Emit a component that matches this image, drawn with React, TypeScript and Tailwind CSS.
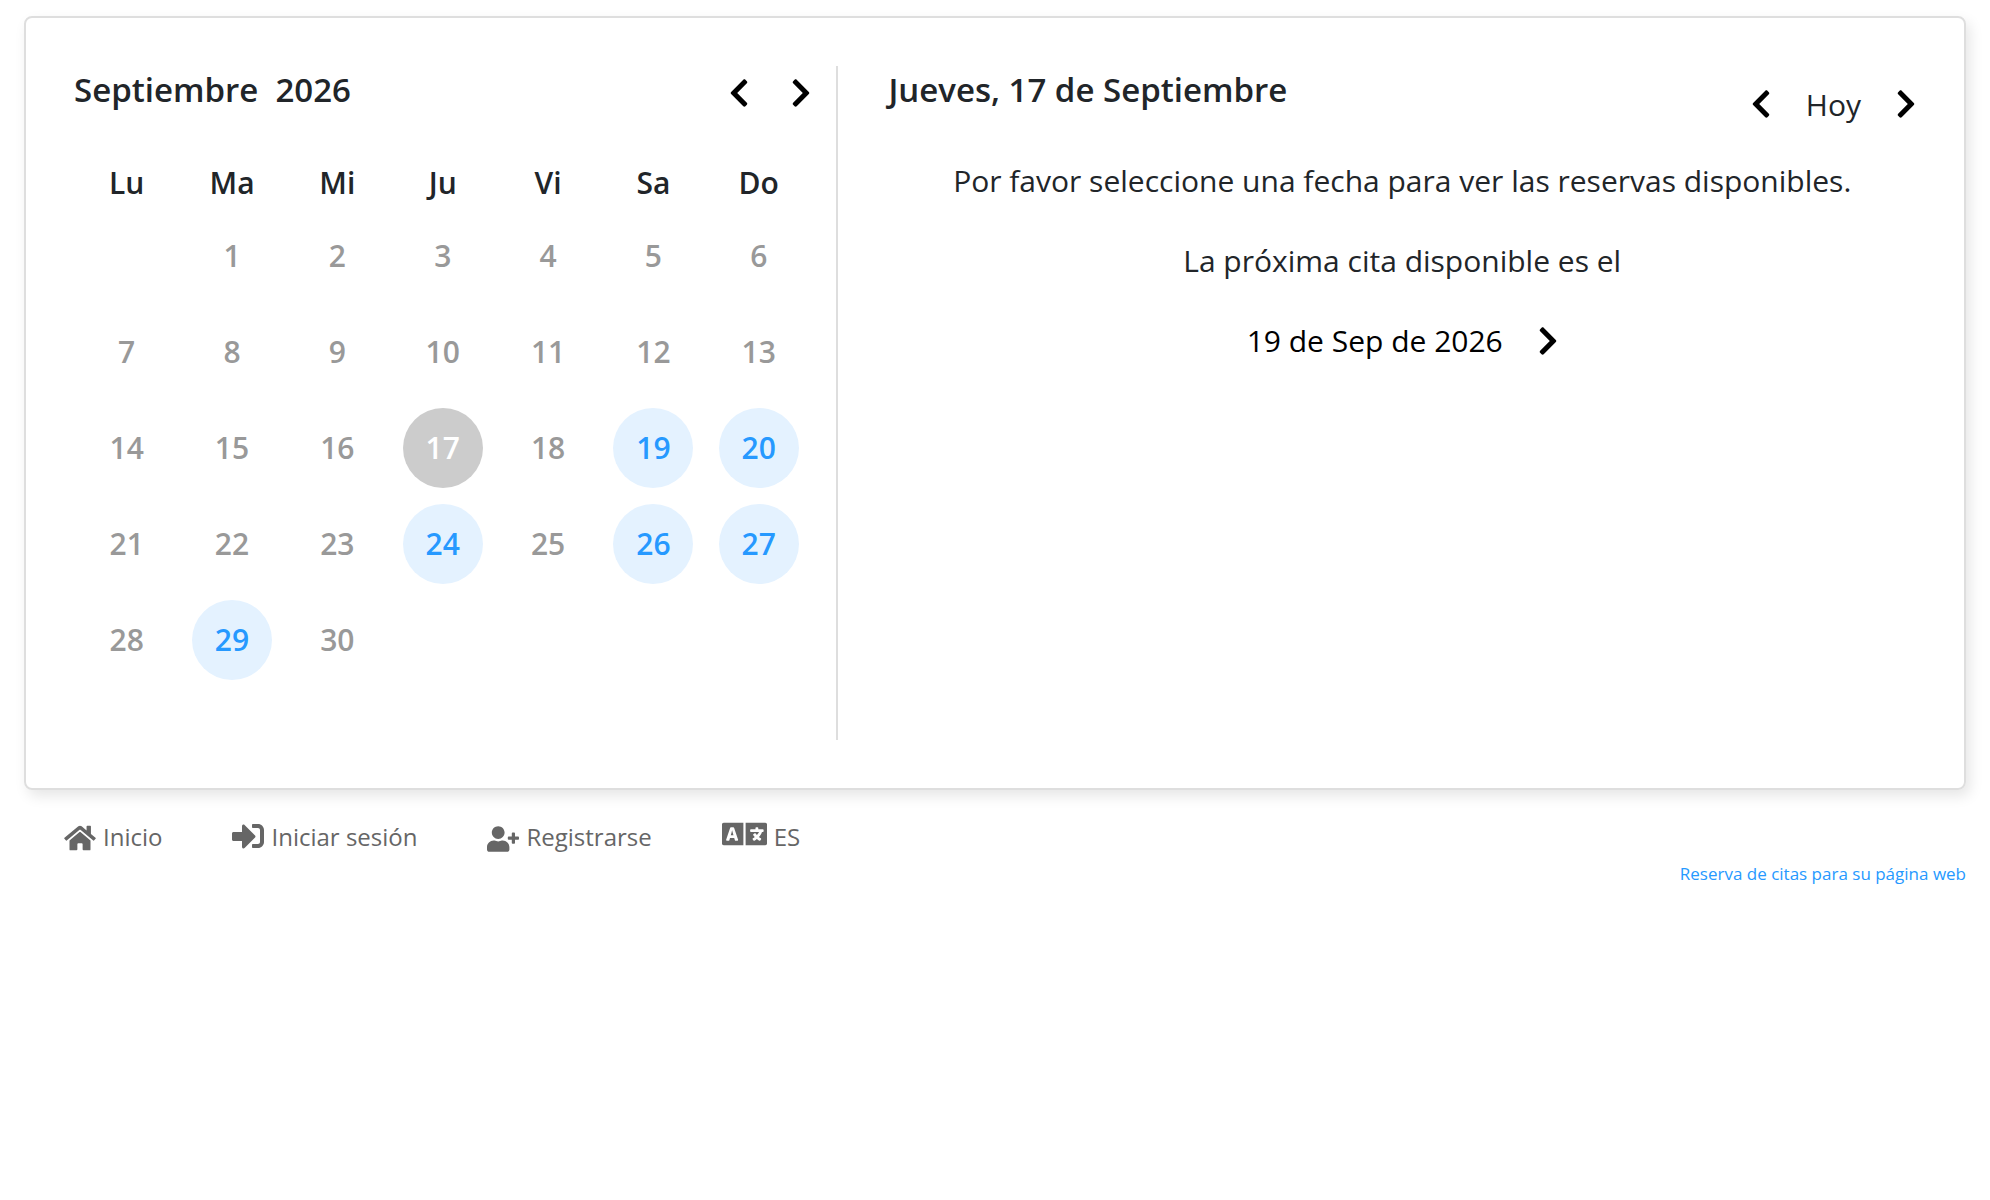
import { FaChevronLeft, FaChevronRight, FaHome, FaLanguage, FaSignInAlt, FaUserPlus } from "react-icons/fa";

const weekdays = ["Lu", "Ma", "Mi", "Ju", "Vi", "Sa", "Do"];

// 0 means an empty cell
const weeks = [
  [0, 1, 2, 3, 4, 5, 6],
  [7, 8, 9, 10, 11, 12, 13],
  [14, 15, 16, 17, 18, 19, 20],
  [21, 22, 23, 24, 25, 26, 27],
  [28, 29, 30, 0, 0, 0, 0],
];

const today = 17;
const available = [19, 20, 24, 26, 27, 29];

function dayClass(day: number) {
  if (day === today) return "bg-[#ccc] text-white";
  if (available.includes(day)) return "bg-[#e4f2ff] text-[#2699ff]";
  return "text-[#999]";
}

function Calendar() {
  return (
    <section className="w-[41.5%] shrink-0 border-r-2 border-[#dedede] pr-[25px] pb-[52px]">
      <div className="flex h-[92px] items-start justify-between">
        <h2 className="text-[33px] leading-[48px] font-semibold whitespace-pre">Septiembre  2026</h2>
        <div className="flex h-[54px] items-center gap-[42px] text-black">
          <button aria-label="Mes anterior">
            <FaChevronLeft className="h-8 w-5" />
          </button>
          <button aria-label="Mes siguiente">
            <FaChevronRight className="h-8 w-5" />
          </button>
        </div>
      </div>
      <table className="w-full table-fixed text-center text-[30px] leading-[48px]">
        <thead>
          <tr className="h-[50px]">
            {weekdays.map((name) => (
              <th key={name} className="p-0 font-semibold">{name}</th>
            ))}
          </tr>
        </thead>
        <tbody>
          {weeks.map((week, i) => (
            <tr key={i} className="h-24">
              {week.map((day, j) => (
                <td key={j} className="p-0">
                  {day > 0 && (
                    <button className={`mx-auto flex size-20 items-center justify-center rounded-full font-semibold ${dayClass(day)}`}>
                      {day}
                    </button>
                  )}
                </td>
              ))}
            </tr>
          ))}
        </tbody>
      </table>
    </section>
  );
}

function DayPanel() {
  return (
    <section className="grow pl-[50px]">
      <div className="flex h-[91px] items-start justify-between">
        <h2 className="text-[33px] leading-[48px] font-semibold">Jueves, 17 de Septiembre</h2>
        <div className="flex h-[76px] items-center gap-[35px] text-[30px]">
          <button aria-label="Día anterior" className="text-black">
            <FaChevronLeft className="h-8 w-5" />
          </button>
          <button>Hoy</button>
          <button aria-label="Día siguiente" className="text-black">
            <FaChevronRight className="h-8 w-5" />
          </button>
        </div>
      </div>
      <div className="flex flex-col items-center gap-8 text-center text-[30px] leading-[48px]">
        <p>Por favor seleccione una fecha para ver las reservas disponibles.</p>
        <p>La próxima cita disponible es el</p>
        <button className="flex items-center gap-[35px] text-black">
          19 de Sep de 2026
          <FaChevronRight className="h-8 w-5" />
        </button>
      </div>
    </section>
  );
}

export default function App() {
  return (
    <div className="bg-white px-6 pt-4 font-['Segoe_UI','Open_Sans',sans-serif] text-[#212529]">
      <main className="flex rounded-lg border-2 border-[#dedede] p-12 shadow-[4px_6px_14px_rgba(0,0,0,0.1)]">
        <Calendar />
        <DayPanel />
      </main>
      <nav className="flex items-end gap-[70px] pt-[26px] pl-10 text-2xl leading-[30px] text-[#666]">
        <a href="#inicio" className="flex items-end gap-[7px]">
          <FaHome className="h-7 w-8" />
          Inicio
        </a>
        <a href="#login" className="flex items-end gap-[7px]">
          <FaSignInAlt className="size-8" />
          Iniciar sesión
        </a>
        <a href="#registro" className="flex items-end gap-[7px]">
          <FaUserPlus className="h-[26px] w-8" />
          Registrarse
        </a>
        <a href="#idioma" className="flex items-end gap-[7px]">
          <FaLanguage className="h-9 w-[45px]" />
          ES
        </a>
      </nav>
      <footer className="flex justify-end pt-2">
        <a href="#reservas" className="text-[17px] leading-7 text-[#2699ff]">Reserva de citas para su página web</a>
      </footer>
    </div>
  );
}
